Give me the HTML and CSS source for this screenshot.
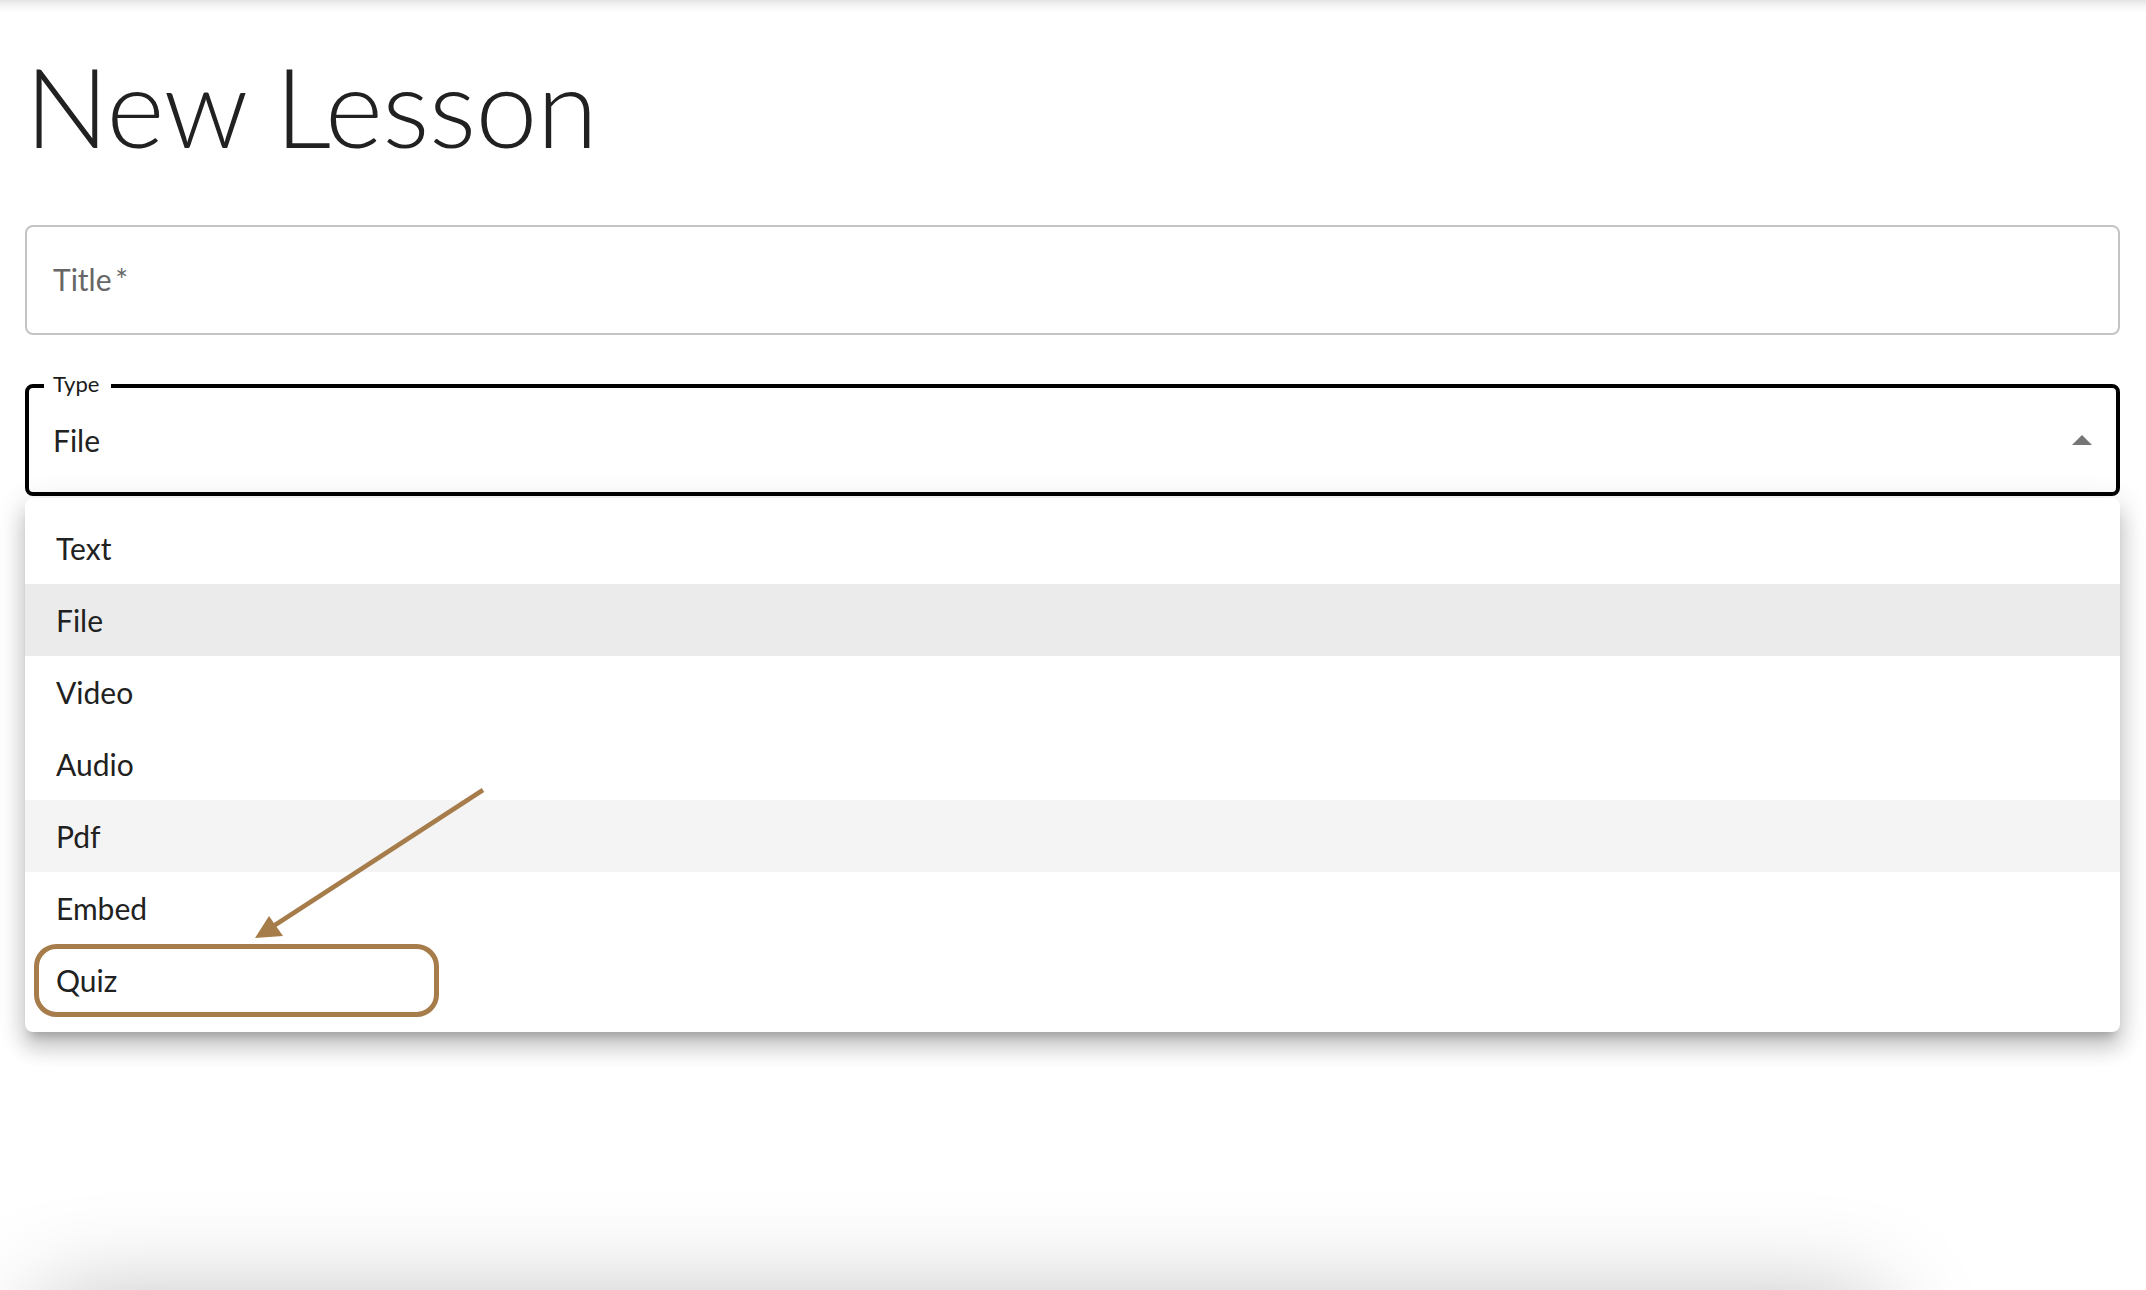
FILE: index.html
```html
<!DOCTYPE html>
<html lang="en">
<head>
<meta charset="utf-8">
<title>New Lesson</title>
<link rel="stylesheet" href="styles.css">
</head>
<body>
<div class="page">
  <div class="top-shade"></div>
  <main class="content">
    <h1 class="heading">New Lesson</h1>

    <div class="field">
      <span class="placeholder">Title&thinsp;*</span>
    </div>

    <div class="select-wrap">
      <div class="select">
        <span class="select-label">Type</span>
        <span class="select-value">File</span>
        <svg class="caret" width="20" height="10" viewBox="0 0 20 10" aria-hidden="true">
          <path d="M0 10 L10 0 L20 10 Z" fill="#757575"/>
        </svg>
      </div>
      <ul class="menu">
        <li class="menu-item">Text</li>
        <li class="menu-item is-selected">File</li>
        <li class="menu-item">Video</li>
        <li class="menu-item">Audio</li>
        <li class="menu-item is-hover">Pdf</li>
        <li class="menu-item">Embed</li>
        <li class="menu-item">Quiz</li>
      </ul>
    </div>

    <div class="below-card"></div>
  </main>

  <svg class="annotation" width="2146" height="1290" viewBox="0 0 2146 1290" aria-hidden="true">
    <rect x="36.5" y="946.5" width="400" height="68" rx="20" ry="20" fill="none" stroke="#a67c4a" stroke-width="5"/>
    <line x1="483" y1="790" x2="272" y2="927" stroke="#a67c4a" stroke-width="4.5"/>
    <polygon points="255,938 269,916 283,936" fill="#a67c4a"/>
  </svg>
</div>
</body>
</html>
```

FILE: styles.css
```css
html, body {
  margin: 0;
  padding: 0;
  background: #ffffff;
}

body {
  font-family: "Lato", "Liberation Sans", sans-serif;
  color: #212121;
}

.page {
  position: relative;
  width: 2146px;
  height: 1290px;
  overflow: hidden;
  background: #ffffff;
}

.top-shade {
  height: 14px;
  background: linear-gradient(to bottom, #e4e4e4 0%, #f3f3f3 35%, #fcfcfc 75%, #ffffff 100%);
}

.content {
  padding: 0 26px 0 25px;
}

.heading {
  margin: 24px 0 0 0;
  font-size: 111px;
  font-weight: 300;
  line-height: 134px;
  letter-spacing: -0.6px;
  color: #212121;
}

.field {
  margin-top: 53px;
  height: 110px;
  box-sizing: border-box;
  border: 2px solid #c4c4c4;
  border-radius: 8px;
  display: flex;
  align-items: center;
  padding: 0 26px;
}

.placeholder {
  font-size: 30px;
  line-height: 40px;
  color: #666666;
  padding-bottom: 3px;
}

.select-wrap {
  position: relative;
  margin-top: 49px;
}

.select {
  position: relative;
  height: 112px;
  box-sizing: border-box;
  border: 4px solid #000000;
  border-radius: 8px;
  display: flex;
  align-items: center;
  padding: 0 24px;
}

.select-label {
  position: absolute;
  top: -16px;
  left: 15px;
  padding: 0 12px 0 9px;
  background: #ffffff;
  font-size: 22px;
  line-height: 24px;
  color: #1a1a1a;
}

.select-value {
  font-size: 30px;
  line-height: 40px;
  color: #212121;
}

.caret {
  margin-left: auto;
  display: block;
}

.menu {
  position: absolute;
  top: calc(100% + 2px);
  left: 0;
  right: 0;
  margin: 0;
  padding: 14px 0 16px;
  list-style: none;
  background: #ffffff;
  border-radius: 8px;
  box-shadow:
    0 10px 10px -6px rgba(0, 0, 0, 0.2),
    0 16px 20px 2px rgba(0, 0, 0, 0.14),
    0 6px 28px 4px rgba(0, 0, 0, 0.12);
  z-index: 2;
}

.menu-item {
  height: 72px;
  display: flex;
  align-items: center;
  padding: 0 31px;
  font-size: 30px;
  color: #212121;
}

.menu-item.is-selected {
  background: #ebebeb;
}

.menu-item.is-hover {
  background: #f4f4f4;
}

.below-card {
  margin-top: 802px;
  margin-left: 15px;
  width: 1840px;
  height: 200px;
  background: #ffffff;
  border-radius: 16px;
  box-shadow: 0 0 100px rgba(0, 0, 0, 0.26);
}

.annotation {
  position: absolute;
  top: 0;
  left: 0;
  pointer-events: none;
  z-index: 5;
}
```
